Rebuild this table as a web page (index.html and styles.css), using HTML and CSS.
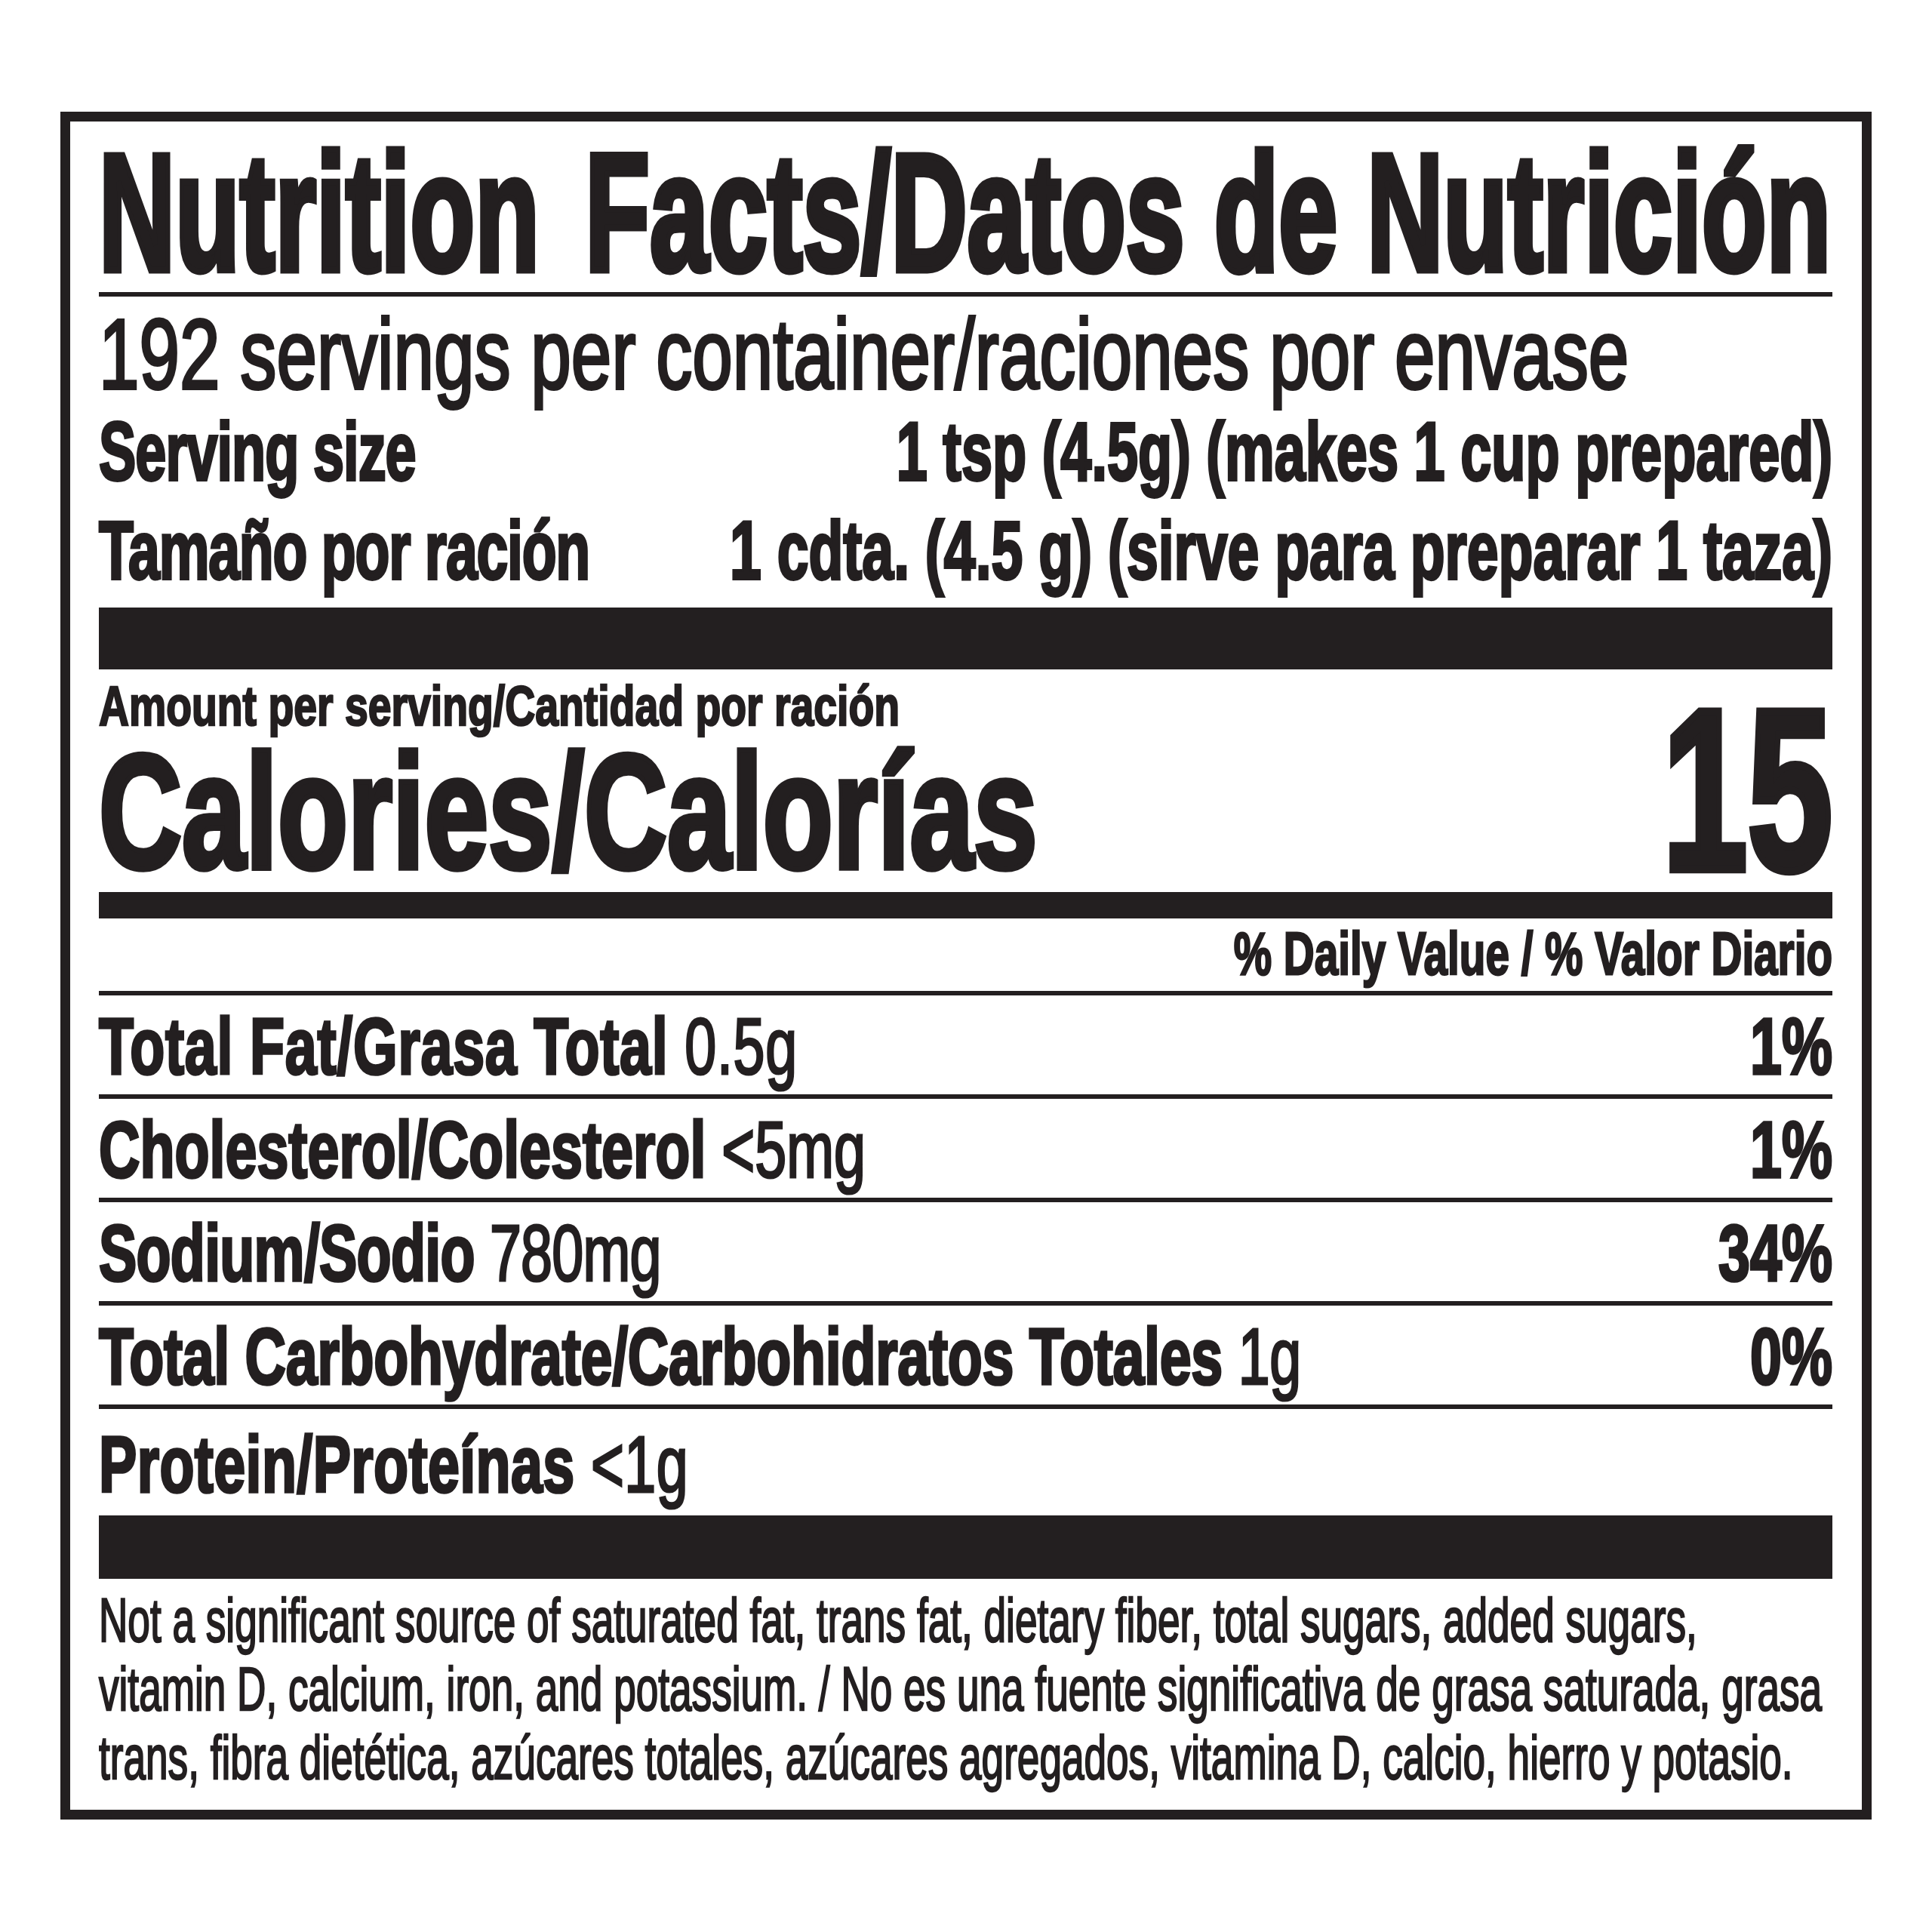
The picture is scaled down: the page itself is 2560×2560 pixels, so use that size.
FILE: index.html
```html
<!DOCTYPE html>
<html lang="en">
<head>
<meta charset="utf-8">
<title>Nutrition Facts / Datos de Nutrición</title>
<link rel="stylesheet" href="styles.css">
</head>
<body>
<section class="label">
  <h1 class="sq title b"><span class="title-word">Nutrition</span> Facts/Datos de Nutrición</h1>
  <div class="rule rule--title"></div>
  <p class="sq servings r">192 servings per container/raciones por envase</p>
  <div class="sq serv-row serv-row--en">
    <span class="b serv-left">Serving size</span>
    <span class="b">1 tsp (4.5g) (makes 1 cup prepared)</span>
  </div>
  <div class="sq serv-row serv-row--es">
    <span class="b serv-left serv-left--es">Tamaño por ración</span>
    <span class="b">1 cdta. (4.5 g) (sirve para preparar 1 taza)</span>
  </div>
  <div class="bar bar--serv"></div>
  <div class="cal">
    <div class="cal-left">
      <div class="sq amount b">Amount per serving/Cantidad por ración</div>
      <div class="sq calories b">Calories/Calorías</div>
    </div>
    <div class="cal-num b">15</div>
  </div>
  <div class="bar bar--mid"></div>
  <div class="sq dv b">% Daily Value / % Valor Diario</div>
  <div class="rule rule--dv"></div>
  <div class="sq nrow"><span class="nname nname--fat"><b class="b">Total Fat/Grasa Total</b> <span class="r">0.5g</span></span><b class="b">1%</b></div>
  <div class="rule"></div>
  <div class="sq nrow"><span class="nname"><b class="b">Cholesterol/Colesterol</b> <span class="r">&lt;5mg</span></span><b class="b">1%</b></div>
  <div class="rule"></div>
  <div class="sq nrow"><span class="nname nname--sodium"><b class="b">Sodium/Sodio</b> <span class="r">780mg</span></span><b class="b">34%</b></div>
  <div class="rule"></div>
  <div class="sq nrow"><span class="nname nname--carb"><b class="b">Total Carbohydrate/Carbohidratos Totales</b> <span class="r">1g</span></span><b class="b">0%</b></div>
  <div class="rule"></div>
  <div class="sq nrow nrow--last"><span class="nname nname--protein"><b class="b">Protein/Proteínas</b> <span class="r">&lt;1g</span></span></div>
  <div class="bar bar--foot"></div>
  <p class="sq foot r">Not a significant source of saturated fat, trans fat, dietary fiber, total sugars, added sugars,<br>vitamin D, calcium, iron, and potassium. / No es una fuente significativa de grasa saturada, grasa<br>trans, fibra dietética, azúcares totales, azúcares agregados, vitamina D, calcio, hierro y potasio.</p>
</section>
</body>
</html>
```

FILE: styles.css
```css
* {
  box-sizing: border-box;
}

html,
body {
  margin: 0;
  padding: 0;
  background: #ffffff;
  overflow: hidden;
}

body {
  font-family: "Liberation Sans", Arial, sans-serif;
  color: #231f20;
}

.label {
  width: 2400px;
  margin: 148px 0 0 80px;
  border: 13px solid #231f20;
  padding: 21px 39px 23px 38px;
  overflow: hidden;
}

/* squeezed text line: laid out wide, then compressed horizontally */
.sq {
  margin: 0;
  white-space: nowrap;
  transform-origin: 0 0;
}

.b {
  font-weight: 700;
  -webkit-text-stroke: 0.035em #231f20;
}

.r {
  font-weight: 400;
  -webkit-text-stroke: 0.03em #231f20;
}

.rule {
  height: 6px;
  background: #231f20;
}

.rule--title {
  margin-top: 5px;
}

.rule--dv {
  margin-top: 9px;
}

.bar {
  background: #231f20;
}

.bar--serv {
  margin-top: 10px;
  height: 82px;
}

.bar--mid {
  margin-top: 16px;
  height: 35px;
}

.bar--foot {
  margin-top: 4px;
  height: 84px;
}

/* title */
.title {
  font-size: 220px;
  line-height: 200px;
  width: calc(100% / 0.637);
  transform: scaleX(0.637);
  -webkit-text-stroke: 0.04em #231f20;
}

.title-word {
  margin-right: 34px;
}

/* servings */
.servings {
  margin-top: 17px;
  font-size: 132px;
  line-height: 120px;
  width: calc(100% / 0.729);
  transform: scaleX(0.729);
}

.serv-row {
  display: flex;
  justify-content: space-between;
  font-size: 109px;
  line-height: 131px;
}

.serv-row--en {
  margin-top: 3px;
  width: calc(100% / 0.678);
  transform: scaleX(0.678);
}

.serv-row--es {
  width: calc(100% / 0.689);
  transform: scaleX(0.689);
}

.serv-left {
  letter-spacing: -0.013em;
}

.serv-left--es {
  letter-spacing: -0.016em;
}

/* calories */
.cal {
  display: flex;
  align-items: flex-end;
}

.cal-left {
  flex: 1;
  min-width: 0;
}

.amount {
  margin-top: 12px;
  font-size: 74px;
  line-height: 74px;
  width: calc(100% / 0.748);
  transform: scaleX(0.748);
}

.calories {
  margin-top: 13px;
  font-size: 215px;
  line-height: 180px;
  width: calc(100% / 0.708);
  transform: scaleX(0.708);
}

.cal-num {
  font-size: 304px;
  line-height: 239px;
  white-space: nowrap;
  transform: scaleX(0.666);
  transform-origin: 100% 0;
}

/* daily value header */
.dv {
  margin-top: 7px;
  font-size: 80px;
  line-height: 80px;
  text-align: right;
  width: calc(100% / 0.708);
  transform: scaleX(0.708);
}

/* nutrient rows */
.nrow {
  display: flex;
  justify-content: space-between;
  padding-top: 4px;
  font-size: 105px;
  line-height: 127px;
  font-weight: 700;
  width: calc(100% / 0.718);
  transform: scaleX(0.718);
}

.nrow--last {
  padding-top: 10px;
}

.nname--fat {
  letter-spacing: 0.01em;
}

.nname--sodium {
  letter-spacing: -0.01em;
}

.nname--carb {
  letter-spacing: -0.004em;
}

.nname--protein {
  letter-spacing: 0.005em;
}

/* footnote */
.foot {
  margin-top: 10px;
  font-size: 81px;
  line-height: 91px;
  width: calc(100% / 0.656);
  transform: scaleX(0.656);
}
```
